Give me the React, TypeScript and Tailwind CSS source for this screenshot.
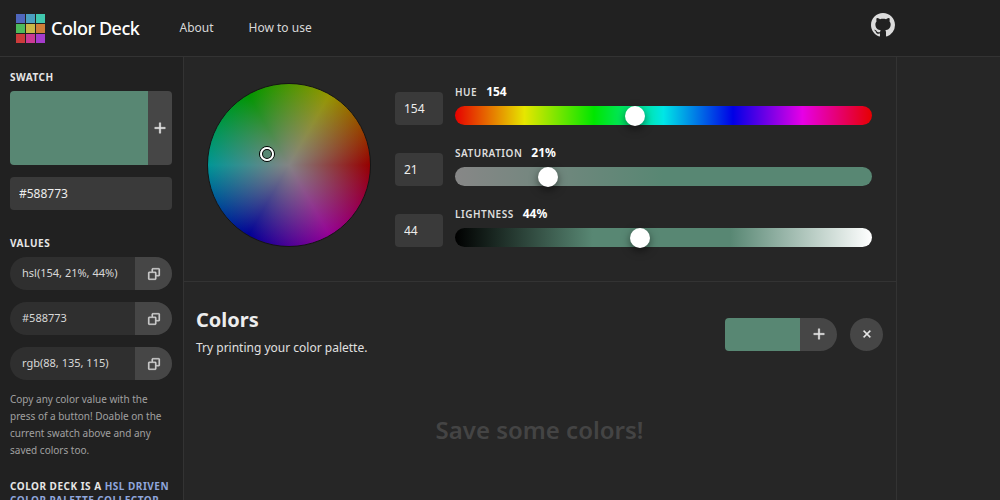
import type { InputHTMLAttributes } from 'react';
import { useState } from 'react';
import { BiCopy, BiPlus, BiX } from 'react-icons/bi';
import clsx from 'clsx';

const LOGO_COLORS = [
  '#4f67bd', '#4a9fc0', '#40c8ae',
  '#4dbb5c', '#c9b846', '#cf7f38',
  '#cc3b3b', '#cc3a94', '#a63ccc',
];

const Logo = () => (
  <svg className="size-[29px]" viewBox="0 0 29 29" aria-hidden="true">
    {LOGO_COLORS.map((color, index) => (
      <rect
        key={color}
        x={(index % 3) * 10}
        y={Math.floor(index / 3) * 10}
        width="9"
        height="9"
        fill={color}
      />
    ))}
  </svg>
);

const GithubMark = () => (
  <svg className="size-6" viewBox="0 0 16 16" fill="currentColor" aria-hidden="true">
    <path
      fillRule="evenodd"
      d="M8 0C3.58 0 0 3.58 0 8c0 3.54 2.29 6.53 5.47 7.59.4.07.55-.17.55-.38 0-.19-.01-.82-.01-1.49-2.01.37-2.53-.49-2.69-.94-.09-.23-.48-.94-.82-1.13-.28-.15-.68-.52-.01-.53.63-.01 1.08.58 1.23.82.72 1.21 1.87.87 2.33.66.07-.52.28-.87.51-1.07-1.78-.2-3.64-.89-3.64-3.95 0-.87.31-1.59.82-2.15-.08-.2-.36-1.02.08-2.12 0 0 .67-.21 2.2.82.64-.18 1.32-.27 2-.27.68 0 1.36.09 2 .27 1.53-1.04 2.2-.82 2.2-.82.44 1.1.16 1.92.08 2.12.51.56.82 1.27.82 2.15 0 3.07-1.87 3.75-3.65 3.95.29.25.54.73.54 1.48 0 1.07-.01 1.93-.01 2.2 0 .21.15.46.55.38A8.013 8.013 0 0016 8c0-4.42-3.58-8-8-8z"
    />
  </svg>
);

const Header = () => (
  <header className="flex h-[57px] shrink-0 items-center border-b border-[#333] bg-[#212121] pr-[105px] pl-4">
    <a href="#" className="flex items-center gap-[6px] text-[18px] font-medium tracking-tight text-white">
      <Logo />
      Color Deck
    </a>
    <nav className="ml-10 flex gap-[35px] text-[#d8d8d8]">
      <a href="#about">About</a>
      <a href="#how-to-use">How to use</a>
    </nav>
    <a href="#github" aria-label="GitHub" className="mb-[6px] ml-auto text-[#dcdcdc]">
      <GithubMark />
    </a>
  </header>
);

interface ValuePillProps {
  value: string;
}

/** A color value with a copy button on its right end. */
const ValuePill = ({ value }: ValuePillProps) => (
  <div className="flex h-[33px] overflow-hidden rounded-full bg-[#2f2f2f]">
    <span className="flex flex-1 items-center pl-3 text-[11px] text-[#d8d8d8]">{value}</span>
    <button
      type="button"
      aria-label={`Copy ${value}`}
      className="flex w-[37px] items-center justify-center bg-[#464646] text-[#dcdcdc]"
      onClick={() => navigator.clipboard?.writeText(value)}
    >
      <BiCopy className="size-[14px] stroke-[0.5]" />
    </button>
  </div>
);

interface SidebarProps {
  hex: string;
  values: string[];
  onHexChange: (hex: string) => void;
}

const Sidebar = ({ hex, values, onHexChange }: SidebarProps) => (
  <aside className="w-46 shrink-0 overflow-y-auto border-r border-[#333] bg-[#212121] pt-3 pr-[11px] pl-[10px] [scrollbar-width:none]">
    <label htmlFor="hex" className="block text-[10px] leading-4 font-bold tracking-wider text-[#e6e6e6]">
      SWATCH
    </label>
    <div className="mt-[6px] flex h-[74px] overflow-hidden rounded">
      <div className="flex-1 bg-[#588773]" />
      <button
        type="button"
        aria-label="Save swatch"
        className="flex w-6 items-center justify-center bg-[#464646] text-[#e6e6e6]"
      >
        <BiPlus className="size-[18px] stroke-[0.5]" />
      </button>
    </div>
    <input
      id="hex"
      type="text"
      value={hex}
      onChange={(e) => onHexChange(e.target.value)}
      className="mt-3 block h-[33px] w-full rounded bg-[#3a3a3a] px-[9px] text-[#ededed] outline-none"
    />

    <h3 className="mt-[25px] text-[10px] leading-4 font-bold tracking-wider text-[#e6e6e6]">VALUES</h3>
    <div className="mt-[6px] flex flex-col gap-3">
      {values.map((value) => (
        <ValuePill key={value} value={value} />
      ))}
    </div>

    <p className="mt-[11px] text-[10px] leading-[17px] text-[#a0a0a0]">
      Copy any color value with the press of a button! Doable on the current swatch above and any saved colors too.
    </p>
    <p className="mt-5 text-[10px] leading-[14px] font-bold tracking-wider text-[#e6e6e6]">
      COLOR DECK IS A <a href="#hsl" className="text-[#8fa6dc]">HSL DRIVEN COLOR PALETTE COLLECTOR</a>
    </p>
  </aside>
);

/** Hue runs counterclockwise from the right, saturation grows towards the rim. */
const ColorWheel = () => (
  <div className="relative size-[164px] shrink-0 rounded-full border border-[#151515] bg-[radial-gradient(closest-side,#848484,#84848400),conic-gradient(from_90deg,#960000,#960096,#000096,#009696,#009600,#969600,#960000)]">
    <span className="absolute top-[62px] left-[51px] size-4 rounded-full border border-black bg-[#588773]">
      <span className="block size-full rounded-full border-2 border-white bg-black p-px">
        <span className="block size-full rounded-full bg-[#588773]" />
      </span>
    </span>
  </div>
);

interface ChannelProps extends InputHTMLAttributes<HTMLInputElement> {
  id: string;
  label: string;
  value: number;
  /** Unit shown after the value */
  unit?: string;
  /** Background of the slider track */
  track: string;
  onValueChange: (value: number) => void;
}

const Channel = ({ id, label, value, unit = '', track, max = 100, onValueChange }: ChannelProps) => (
  <div className="flex items-end gap-3">
    <input
      type="text"
      inputMode="numeric"
      aria-label={label}
      value={value}
      onChange={(e) => onValueChange(Number(e.target.value) || 0)}
      className="h-[33px] w-12 rounded bg-[#3a3a3a] px-[9px] text-[#ededed] outline-none"
    />
    <div className="flex-1">
      <label htmlFor={id} className="flex items-baseline gap-[9px] leading-[18px] text-[#dedede]">
        <span className="text-[10px] font-semibold tracking-wider">{label}</span>
        <span className="font-bold text-white">{value}{unit}</span>
      </label>
      <input
        id={id}
        type="range"
        min={0}
        max={max}
        value={value}
        onChange={(e) => onValueChange(Number(e.target.value))}
        className={clsx(
          'mt-[5px] block h-[19px] w-full appearance-none rounded-full outline-none',
          '[&::-webkit-slider-thumb]:size-5 [&::-webkit-slider-thumb]:appearance-none [&::-webkit-slider-thumb]:rounded-full',
          '[&::-webkit-slider-thumb]:bg-white [&::-webkit-slider-thumb]:shadow-[0_3px_8px_rgba(0,0,0,0.5)]',
          track
        )}
      />
    </div>
  </div>
);

const ColorsPanel = () => (
  <section className="flex flex-1 flex-col pt-6 pr-[13px] pl-3">
    <div className="flex items-center justify-between">
      <div>
        <h2 className="text-[20px] leading-7 font-bold text-[#ededed]">Colors</h2>
        <p className="mt-[6px] leading-4 text-[#e0e0e0]">Try printing your color palette.</p>
      </div>
      <div className="mt-[6px] flex h-[33px] gap-[13px] text-[#e6e6e6]">
        <div className="flex">
          <div className="w-[75px] rounded-l bg-[#588773]" />
          <button
            type="button"
            aria-label="Add color"
            className="flex w-[37px] items-center justify-center rounded-r-full bg-[#464646]"
          >
            <BiPlus className="size-[18px] stroke-[0.5]" />
          </button>
        </div>
        <button
          type="button"
          aria-label="Clear colors"
          className="flex w-[33px] items-center justify-center rounded-full bg-[#464646]"
        >
          <BiX className="size-4 stroke-[0.5]" />
        </button>
      </div>
    </div>
    <p className="mt-[58px] text-center text-[24px] leading-8 font-semibold text-[#444]">Save some colors!</p>
  </section>
);

export default function App() {
  const [hex, setHex] = useState('#588773');
  const [hue, setHue] = useState(154);
  const [saturation, setSaturation] = useState(21);
  const [lightness, setLightness] = useState(44);

  const values = [`hsl(${hue}, ${saturation}%, ${lightness}%)`, '#588773', 'rgb(88, 135, 115)'];

  return (
    <div className="flex h-screen flex-col overflow-hidden bg-[#262626] font-['Noto_Sans',sans-serif] text-[12px]">
      <Header />
      <div className="flex min-h-0 flex-1">
        <Sidebar hex={hex} values={values} onHexChange={setHex} />
        <main className="flex flex-1 flex-col border-r border-[#333]">
          <section className="flex gap-6 border-b border-[#333] pt-[26px] pr-6 pb-[34px] pl-[23px]">
            <ColorWheel />
            <div className="flex flex-1 flex-col justify-between">
              <Channel
                id="hue"
                label="HUE"
                value={hue}
                max={360}
                onValueChange={setHue}
                track="bg-[linear-gradient(to_right,#e60000,#e6e600,#00e600,#00e6e6,#0000e6,#e600e6,#e60000)]"
              />
              <Channel
                id="saturation"
                label="SATURATION"
                value={saturation}
                unit="%"
                onValueChange={setSaturation}
                track="bg-[linear-gradient(to_right,#878787,#588773_50%)]"
              />
              <Channel
                id="lightness"
                label="LIGHTNESS"
                value={lightness}
                unit="%"
                onValueChange={setLightness}
                track="bg-[linear-gradient(to_right,#000,#588773_33%,#588773_66%,#fff)]"
              />
            </div>
          </section>
          <ColorsPanel />
        </main>
        <div className="w-[103px] shrink-0" />
      </div>
    </div>
  );
}
